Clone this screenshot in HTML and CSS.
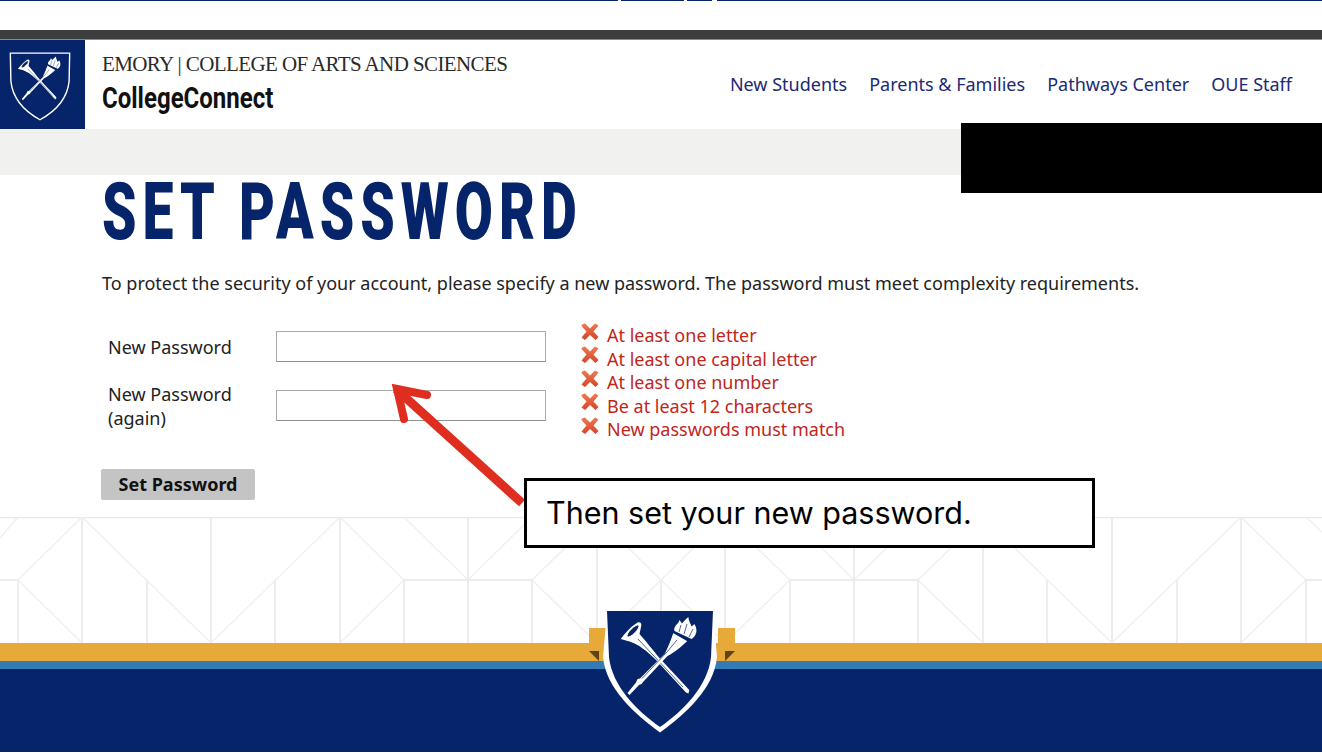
FILE: index.html
```html
<!DOCTYPE html>
<html lang="en">
    <head>
        <meta charset="UTF-8">
        <title>Set Password</title>
        <link rel="stylesheet" href="styles.css">
    </head>
    <body>
    <svg class="defs" width="0" height="0">
        <defs>
            <linearGradient id="xfill" x1="0" y1="0" x2="0" y2="1">
                <stop offset="0" stop-color="#ee7a50"/>
                <stop offset="1" stop-color="#d4452a"/>
            </linearGradient>
            <symbol id="cross" viewBox="0 0 18 18">
                <path d="M1 1.500 L4 0.500 L9 5.500 L14 0.500 L17.500 2.500 L12.500 8.500 L17.500 14 L14.500 17 L9 12 L4 17 L0.500 14.500 L5.500 8.500 L0.500 3 Z" fill="url(#xfill)"/>
            </symbol>
            <symbol id="emblem" viewBox="0 0 106 121">
                <path fill="#fff" d="M13.700 28 C20 20 26 14 31 11.300 C34 11 35 13 34 16 L32.500 23 C38 29 45 38 52.500 47 L82.300 79 L81.500 82.500 L79 81.500 L50 50 C43 43 35 36 27 32.300 C22 30 17 29 13.700 28 Z"/>
                <ellipse cx="26" cy="20" rx="8" ry="2.600" transform="rotate(-45 26 20)" fill="#06246a" stroke="#fff" stroke-width="0.800"/>
                <path fill="none" stroke="#06246a" stroke-width="0.700" d="M31 28 L76 76"/>
                <path fill="#fff" d="M66.300 22 L80.300 30 C75 35 67 42 60.500 45 L36.500 70.500 L34.500 73 L32 74 L22.500 84 L20.500 82 L29 71.500 L30.500 68 L33 67.500 L58 42.500 C61 36 64 29 66.300 22 Z"/>
                <path fill="none" stroke="#06246a" stroke-width="0.700" d="M70 29 L60 41 L35 67.500"/>
                <path fill="#fff" d="M67.500 20 C66 15 71 14 72.500 9 L75 12.500 C77 10 79 8 81.300 6 C81.500 10 84 13 84.500 15.500 L87.500 13 C90.500 18 90.500 24 84.500 28 Z"/>
                <path fill="none" stroke="#06246a" stroke-width="0.700" d="M72 21 L74 14 M77 23 L80 13 M82 26 L86 18 M66 21.500 L81 30"/>
            </symbol>
        </defs>
    </svg>

    <div class="top-line"></div>
    <div class="dark-bar"></div>

    <header class="site-head">
        <a class="logo-box">
            <svg class="logo-shield" viewBox="-2 -2 110 125">
                <path fill="none" stroke="#fff" stroke-width="2.500" d="M0 0 L106 0 L105 50 C102 80 84 102 53 119 C22 102 4 80 1 50 Z"/>
                <use href="#emblem" width="106" height="121"/>
            </svg>
        </a>
        <div class="brand">
            <div class="brand-top">EMORY | COLLEGE OF ARTS AND SCIENCES</div>
            <div class="brand-name">CollegeConnect</div>
        </div>
        <nav class="site-nav">
            <a>New Students</a>
            <a>Parents &amp; Families</a>
            <a>Pathways Center</a>
            <a>OUE Staff</a>
        </nav>
    </header>
    <div class="grey-band"></div>
    <div class="black-box"></div>

    <main class="content">
        <h1>SET PASSWORD</h1>
        <p class="intro">To protect the security of your account, please specify a new password. The password must meet complexity requirements.</p>
        <div class="form-row">
            <div class="fields">
                <label>New Password</label>
                <input type="password">
                <label>New Password (again)</label>
                <input type="password">
            </div>
            <ul class="rules">
                <li><svg class="x"><use href="#cross"/></svg>At least one letter</li>
                <li><svg class="x"><use href="#cross"/></svg>At least one capital letter</li>
                <li><svg class="x"><use href="#cross"/></svg>At least one number</li>
                <li><svg class="x"><use href="#cross"/></svg>Be at least 12 characters</li>
                <li><svg class="x"><use href="#cross"/></svg>New passwords must match</li>
            </ul>
        </div>
        <button class="submit">Set Password</button>
    </main>

    <footer class="site-foot">
        <svg class="pattern" width="1322" height="126" viewBox="0 517 1322 126">
            <g class="lines">
                <path d="M0 517.500 H1322"/>
                <path d="M0 580 H18 M404 580 H532 M790 580 H918 M1306 580 H1322"/>
                <path d="M18 580 V643 M82 517 V643 M147 580 V643 M211 517 V643 M275 580 V643 M340 517 V643 M404 580 V643 M468 517 V643 M532 580 V643 M597 517 V643 M661 580 V643 M725 517 V643 M790 580 V643 M854 517 V643 M918 580 V643 M983 517 V643 M1047 580 V643 M1112 517 V643 M1177 580 V643 M1241 517 V643 M1306 580 V643"/>
                <path class="thin" d="M0 538 L18 517 M18 580 L82 517 M18 580 L82 643 M82 517 L211 643 M211 643 L340 517 M340 517 L404 580 L340 643 M404 517 L468 580 L532 517 M532 580 L597 517 M532 580 L597 643 M597 517 L725 643 M725 517 L597 643 M725 517 L790 580 L725 643 M790 517 L854 580 L918 517 M918 580 L983 517 M918 580 L983 643 M983 517 L1112 643 M1112 643 L1241 517 M1241 517 L1306 580 L1241 643 M1306 517 L1322 532"/>
            </g>
        </svg>
        <div class="band-gold"></div>
        <div class="band-blue"></div>
        <div class="band-navy"></div>
        <div class="tab tab-left"></div>
        <div class="tab tab-right"></div>
        <svg class="foot-shield" viewBox="-8 -1 122 125" width="122" height="125">
            <path fill="#fff" d="M0 0 L-4 46 C-1 78 28 103 53 121.500 C78 103 107 78 110 46 L106 0 Z"/>
            <path fill="#06246a" d="M0 0 L106 0 L104 46 C101 75 76 100 53 116 C30 100 5 75 2 46 Z"/>
            <use href="#emblem" width="106" height="121"/>
        </svg>
    </footer>

    <svg class="arrow" viewBox="0 0 150 130" width="150" height="130">
        <path fill="none" stroke="#df2e20" stroke-width="9" d="M142 123 L16 9"/>
        <path fill="none" stroke="#df2e20" stroke-width="8" stroke-linecap="round" stroke-miterlimit="10" d="M47 15 L17 9 L24 39"/>
    </svg>
    <div class="callout">Then set your new password.</div>
    </body>
</html>
```

FILE: styles.css
```css
*{
    margin:0;
    padding:0;
    box-sizing:border-box;
}
html,body{
    height:754px;
    overflow:hidden;
    background:#ffffff;
}
body{
    position:relative;
    font-family:"Noto Sans","Open Sans",sans-serif;
    color:#222222;
}
li{
    list-style:none;
}
.defs{
    position:absolute;
}
.top-line{
    height:30px;
    background:linear-gradient(to right,#06246a 618px,#ffffff 618px,#ffffff 621px,#06246a 621px,#06246a 684px,#ffffff 684px,#ffffff 687px,#06246a 687px,#06246a 712px,#ffffff 712px,#ffffff 717px,#06246a 717px) top left/100% 1px no-repeat;
}
.dark-bar{
    height:10px;
    background:#3d3d3d;
    border-bottom:1px solid #8a8a8a;
}
.site-head{
    height:89px;
    display:flex;
    align-items:stretch;
}
.logo-box{
    width:85px;
    background:#06246a;
    display:flex;
    align-items:center;
    justify-content:center;
    padding-top:5px;
    padding-right:5px;
}
.logo-shield{
    width:62px;
    height:70px;
}
.brand{
    margin-left:17px;
    padding-top:12px;
}
.brand-top{
    font-family:"Liberation Serif",serif;
    font-size:21px;
    line-height:24px;
    color:#2a2a2a;
    letter-spacing:-0.6px;
    white-space:nowrap;
}
.brand-name{
    font-family:"Roboto",sans-serif;
    font-weight:700;
    font-size:30px;
    line-height:36px;
    color:#111111;
    margin-top:4px;
    transform:scaleX(0.8);
    transform-origin:left center;
}
.site-nav{
    margin-left:auto;
    padding:32px 30px 0 0;
    display:flex;
    gap:22px;
    font-size:18px;
    line-height:24px;
    color:#1b2a73;
}
.grey-band{
    height:46px;
    background:#f1f1ef;
}
.black-box{
    position:absolute;
    left:961px;
    top:123px;
    width:361px;
    height:70px;
    background:#000000;
}
.content{
    height:342px;
    padding-left:102px;
}
h1{
    font-family:"Roboto",sans-serif;
    font-size:80px;
    line-height:74px;
    font-weight:900;
    letter-spacing:8.7px;
    color:#06246a;
    transform:scaleX(0.69);
    transform-origin:left center;
    white-space:nowrap;
}
.intro{
    margin-top:22px;
    font-size:18px;
    line-height:24px;
    white-space:nowrap;
}
.form-row{
    display:flex;
    margin-top:36px;
}
.fields{
    width:478px;
    display:grid;
    grid-template-columns:174px 270px;
    grid-template-rows:31px 31px;
    row-gap:28px;
    align-items:center;
}
.fields label{
    padding-left:6px;
    font-size:18px;
    line-height:24px;
    width:140px;
}
.fields label:first-child{
    padding-top:1px;
}
.fields input{
    width:270px;
    height:31px;
    border:1px solid #a9a9a9;
    border-bottom-color:#8f8f8f;
    background:#ffffff;
}
.rules{
    margin-top:-7px;
    font-size:18px;
    line-height:23.5px;
    color:#c0261c;
}
.rules li{
    display:flex;
    align-items:center;
}
.x{
    width:18px;
    height:18px;
    margin-left:1px;
    margin-right:8px;
    margin-top:-8px;
}
.submit{
    display:block;
    width:154px;
    height:31px;
    margin-top:27px;
    margin-left:-1px;
    border:0;
    border-radius:2px;
    background:#c4c4c4;
    font-family:inherit;
    font-size:18px;
    font-weight:700;
    color:#111111;
}
.arrow{
    position:absolute;
    left:380px;
    top:380px;
}
.callout{
    position:absolute;
    left:524px;
    top:478px;
    width:571px;
    height:70px;
    padding-left:19px;
    border:3px solid #000000;
    background:#ffffff;
    font-family:"Inter","Roboto",sans-serif;
    font-size:30.5px;
    line-height:64px;
    color:#000000;
    white-space:nowrap;
}
.site-foot{
    position:relative;
    height:235px;
}
.pattern{
    display:block;
}
.lines path{
    fill:none;
    stroke:#e8e8e6;
    stroke-width:1.5;
}
.lines .thin{
    stroke:#eeeeec;
    stroke-width:1.2;
}
.band-gold{
    height:18px;
    background:#e6a93a;
}
.band-blue{
    height:8px;
    background:#327bb5;
}
.band-navy{
    height:83px;
    background:#06246a;
}
.tab{
    position:absolute;
    top:111px;
    width:17px;
    height:33px;
    background:#e6a93a;
}
.tab::after{
    content:"";
    position:absolute;
    bottom:0;
    width:0;
    height:0;
    border-style:solid;
    border-color:transparent;
    border-width:5px;
}
.tab-left{
    left:589px;
}
.tab-left::after{
    left:0;
    border-top-color:#5f4416;
    border-right-color:#5f4416;
}
.tab-right{
    left:718px;
}
.tab-right::after{
    right:0;
    border-top-color:#5f4416;
    border-left-color:#5f4416;
}
.foot-shield{
    position:absolute;
    left:599px;
    top:93px;
}
```
